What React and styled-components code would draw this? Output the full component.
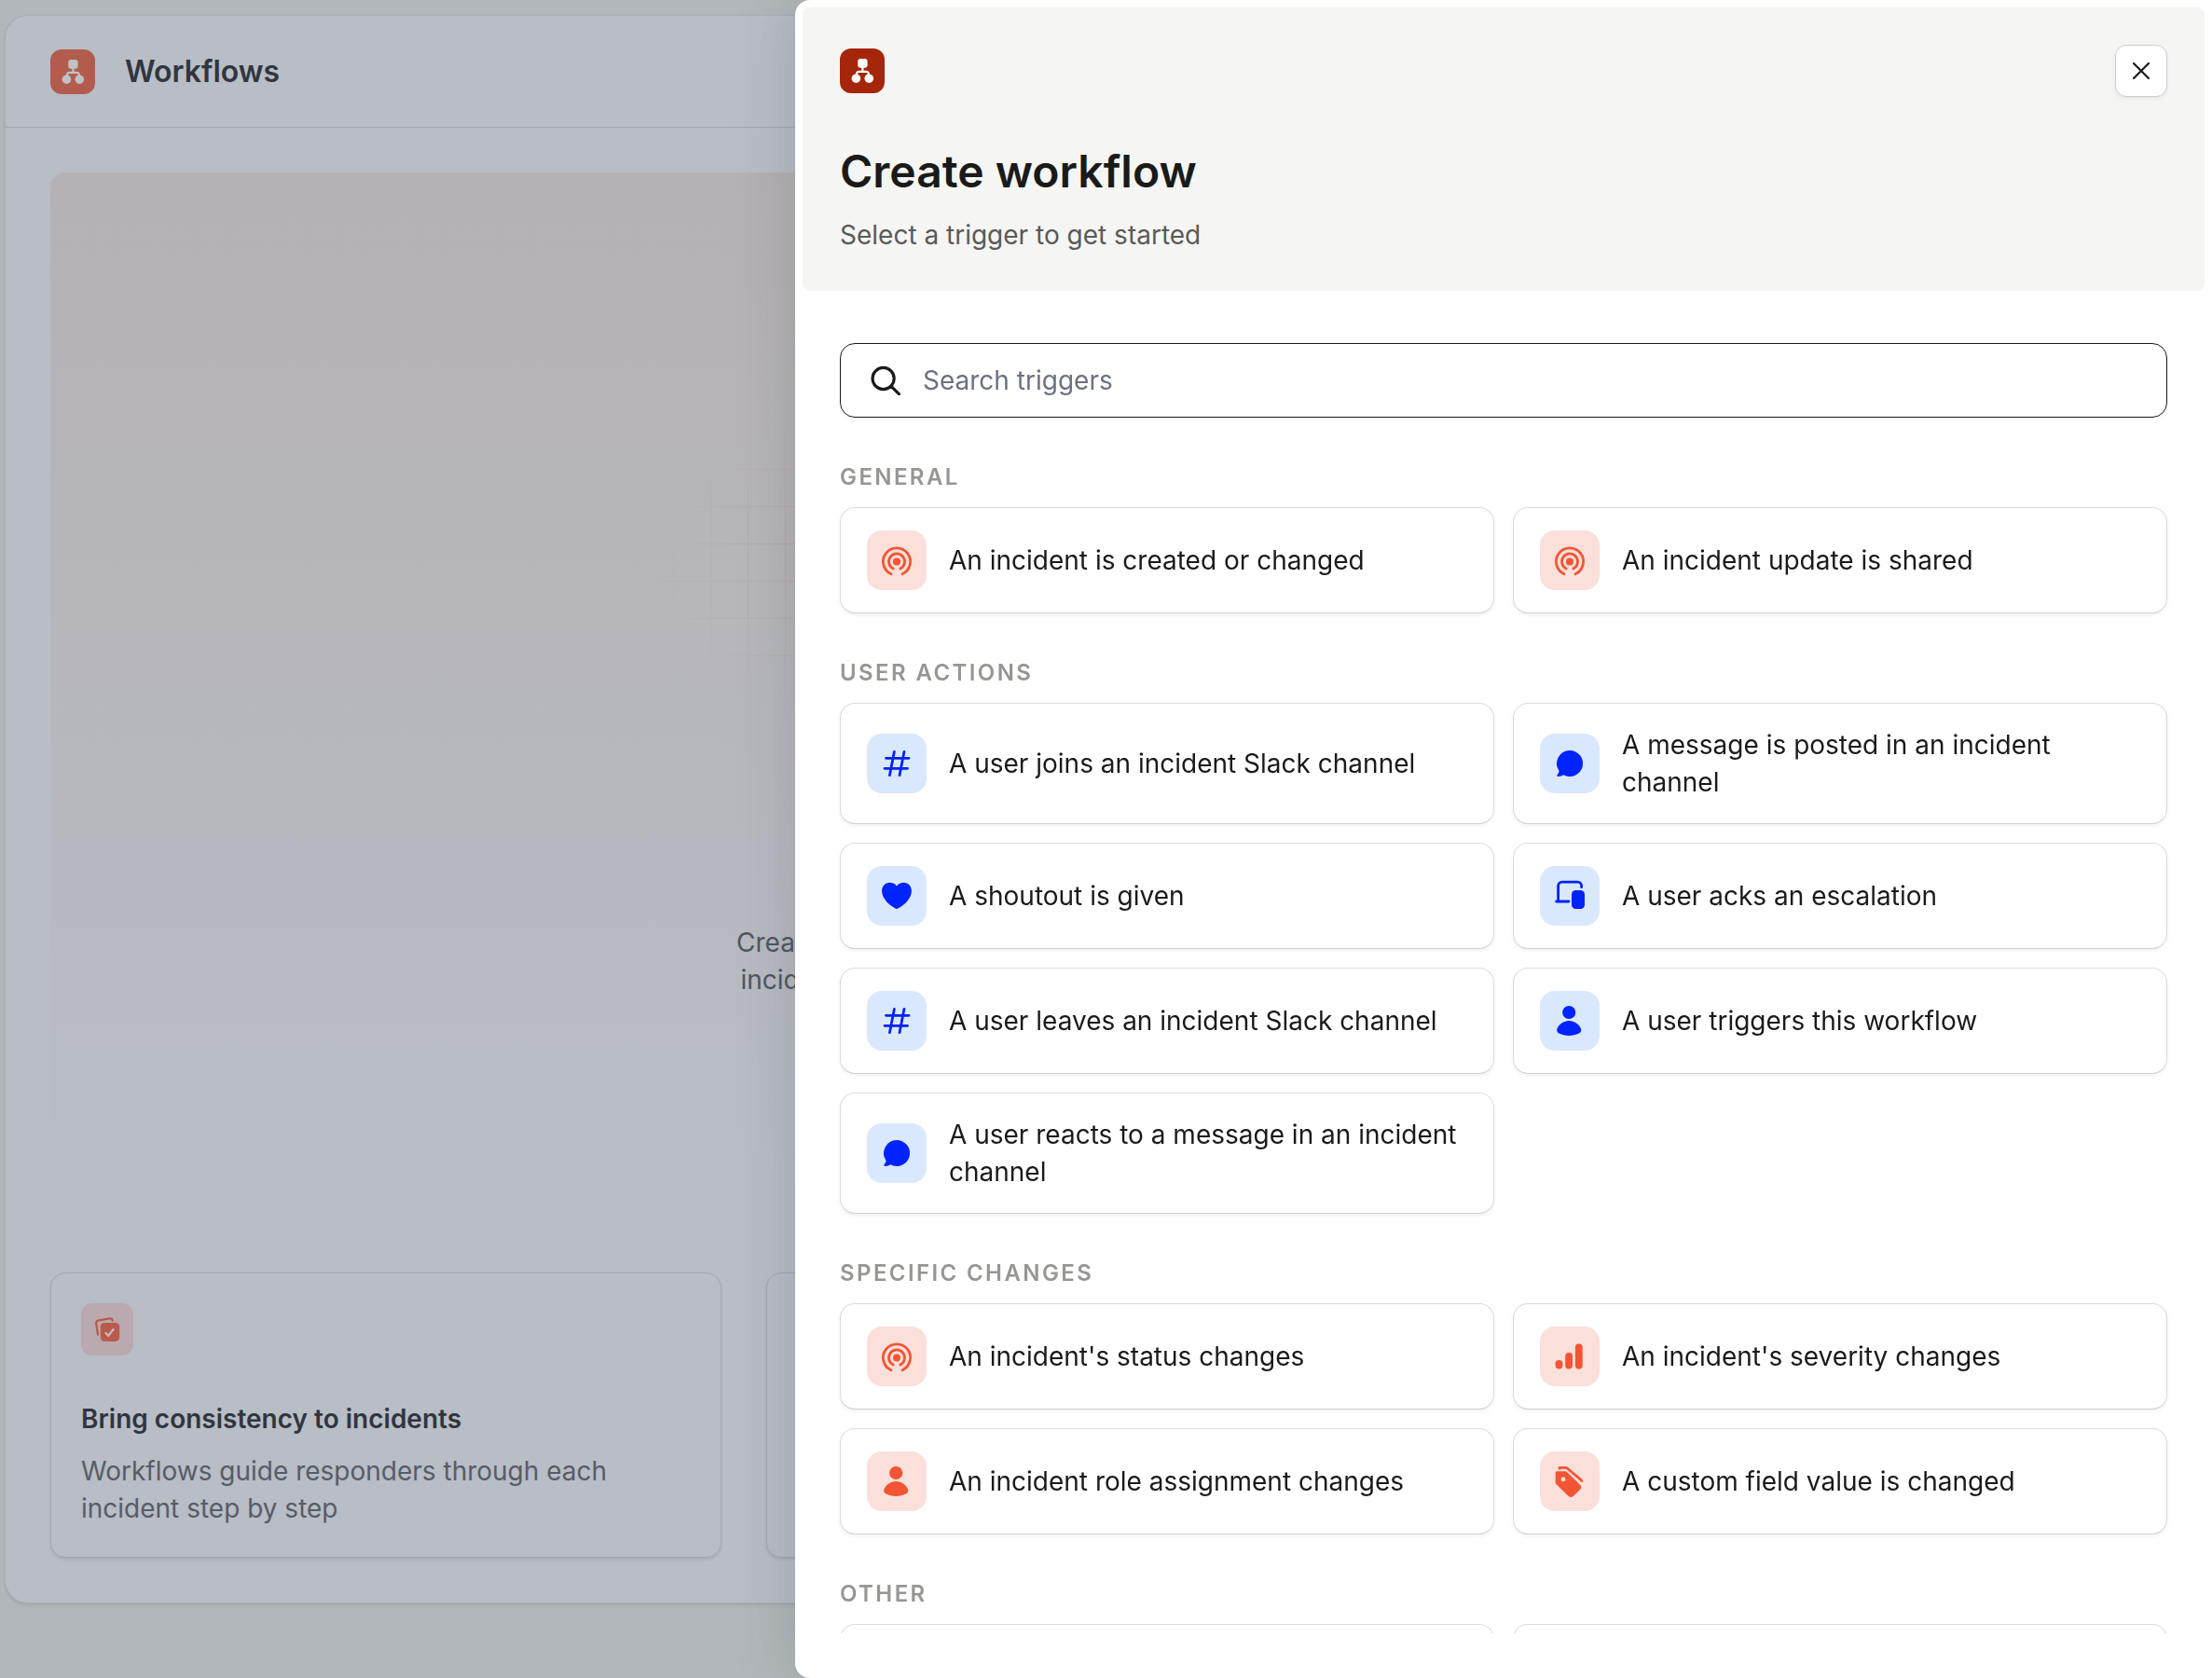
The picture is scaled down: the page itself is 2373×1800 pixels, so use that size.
import React from "react";
import styled, { createGlobalStyle } from "styled-components";

const GlobalStyle = createGlobalStyle`
  *, *::before, *::after { box-sizing: border-box; }
  body {
    margin: 0;
    background: #b1b7ba;
    color: #1a1a19;
    font-family: Inter, "Liberation Sans", sans-serif;
    font-size: 28px;
    line-height: 40px;
  }
  h1, h2, h3, p { margin: 0; }
`;

/* ---------- page behind the drawer ---------- */

const Page = styled.div`
  min-height: 100vh;
  padding: 17px 16px 80px 6px;
  overflow: hidden;
`;

const PageCard = styled.main`
  background: #b8bdc6;
  border-radius: 24px;
  box-shadow: 0 0 0 1px #a9afb6, 0 2px 4px rgba(60, 70, 80, 0.2);
`;

const PageHeader = styled.header`
  display: flex;
  align-items: center;
  gap: 32px;
  height: 120px;
  padding: 0 48px;
  border-bottom: 1px solid #a1a7b0;
`;

const PageTitle = styled.h1`
  font-size: 32px;
  line-height: 40px;
  font-weight: 600;
  color: #31353f;
`;

const PageBody = styled.div`
  display: flex;
  flex-direction: column;
  gap: 48px;
  padding: 48px;
`;

const Banner = styled.section`
  display: flex;
  flex-direction: column;
  align-items: center;
  gap: 168px;
  min-height: 1132px;
  padding-top: 198px;
  border-radius: 16px;
  background: linear-gradient(#b5b1b4, #b8bdc6 96%);
`;

const BannerGrid = styled.div`
  width: 1000px;
  max-width: 100%;
  height: 440px;
  background-image:
    linear-gradient(rgba(180, 150, 160, 0.8) 1px, transparent 1px),
    linear-gradient(90deg, rgba(180, 150, 160, 0.8) 1px, transparent 1px);
  background-size: 40px 40px;
  mask-image: radial-gradient(closest-side, #000 40%, transparent);
`;

const BannerText = styled.p`
  align-self: flex-start;
  padding-left: 736px;
  color: #50555f;
  text-align: center;
`;

const Line = styled.span`
  display: block;
`;

const Features = styled.div`
  display: grid;
  grid-template-columns: repeat(3, 1fr);
  gap: 48px;
`;

const Feature = styled.article`
  display: flex;
  flex-direction: column;
  gap: 16px;
  padding: 32px;
  border: 1px solid #a1a7b0;
  border-radius: 16px;
  box-shadow: 0 2px 3px rgba(60, 70, 80, 0.14);
`;

const FeatureTitle = styled.h2`
  margin-top: 32px;
  font-size: 28px;
  line-height: 40px;
  font-weight: 600;
  color: #31353f;
`;

const FeatureText = styled.p`
  color: #575c66;
`;

/* ---------- shared tiles ---------- */

const tones = {
  brand: ["#a5260a", "#ffffff"],
  brandDim: ["#b35c4e", "#bfc2c5"],
  red: ["#fbdfda", "#f25533"],
  blue: ["#dae8fd", "#0023ff"],
  redDim: ["#baa9af", "#b85a4c"],
};

const Tile = styled.span`
  display: block;
  flex: none;
  width: ${(p) => p.$size}px;
  height: ${(p) => p.$size}px;
  border-radius: ${(p) => (p.$size > 60 ? 16 : 12)}px;
  background: ${(p) => tones[p.$tone][0]};
  color: ${(p) => tones[p.$tone][1]};

  svg { display: block; width: 100%; height: 100%; }
`;

/* ---------- drawer ---------- */

const Drawer = styled.aside`
  position: fixed;
  inset: 0 0 0 auto;
  display: flex;
  flex-direction: column;
  width: 1520px;
  max-width: 100vw;
  padding: 8px 8px 48px;
  background: #fff;
  border-radius: 16px 0 0 16px;
  box-shadow: 0 0 64px rgba(60, 70, 70, 0.22);
`;

const DrawerHeader = styled.header`
  padding: 40px;
  border-radius: 8px;
  background: #f5f5f3;
`;

const HeaderRow = styled.div`
  display: flex;
  align-items: center;
  justify-content: space-between;
  height: 56px;
  margin-bottom: 48px;
`;

const CloseButton = styled.button`
  display: grid;
  place-items: center;
  width: 56px;
  height: 56px;
  padding: 0;
  border: 1px solid #cfcfcf;
  border-radius: 12px;
  background: #fff;
  color: #1a1a19;
  box-shadow: 0 2px 4px rgba(0, 0, 0, 0.06);
`;

const DrawerTitle = styled.h2`
  font-size: 48px;
  line-height: 64px;
  font-weight: 600;
  margin-bottom: 16px;
`;

const DrawerText = styled.p`
  color: #5a5a57;
`;

const DrawerBody = styled.div`
  display: flex;
  flex: 1;
  flex-direction: column;
  gap: 48px;
  min-height: 0;
  padding: 56px 40px 0;
  overflow-y: auto;
  scrollbar-width: none;
`;

const SearchField = styled.label`
  display: flex;
  flex: none;
  align-items: center;
  gap: 24px;
  height: 80px;
  padding: 0 32px;
  border: 1px solid #1a1a19;
  border-radius: 16px;
  box-shadow: 0 2px 4px rgba(0, 0, 0, 0.05);
`;

const SearchInput = styled.input`
  flex: 1;
  min-width: 0;
  padding: 0;
  border: 0;
  outline: 0;
  background: none;
  color: inherit;
  font: inherit;

  &::placeholder { color: #6b7280; opacity: 1; }
`;

const GroupTitle = styled.h3`
  margin-bottom: 16px;
  font-size: 24px;
  line-height: 32px;
  font-weight: 600;
  letter-spacing: 0.1em;
  text-transform: uppercase;
  color: #979693;
`;

const TriggerGrid = styled.div`
  display: grid;
  grid-template-columns: repeat(2, 1fr);
  gap: 20px;
`;

const TriggerCard = styled.button`
  display: flex;
  align-items: center;
  gap: 24px;
  min-height: 114px;
  padding: 24px 28px;
  border: 1px solid #dcdcdc;
  border-bottom-color: #d2d2d2;
  border-radius: 16px;
  background: #fff;
  color: inherit;
  font: inherit;
  text-align: left;
  box-shadow: 0 2px 4px rgba(0, 0, 0, 0.06);
`;

/* ---------- icons ---------- */

const line = { fill: "none", stroke: "currentColor", strokeLinecap: "round", strokeLinejoin: "round" };

const FlowIcon = () => (
  <svg viewBox="0 0 48 48" fill="currentColor" aria-hidden="true">
    <rect x="19.2" y="11" width="10.4" height="9.8" rx="3" />
    <circle cx="17.4" cy="32.2" r="4.8" />
    <circle cx="31.3" cy="32.2" r="4.8" />
    <path {...line} strokeWidth="2.2" d="M24.4 20v4.8M18 28.5v-1.2a2.5 2.5 0 0 1 2.5-2.5h7.8a2.5 2.5 0 0 1 2.5 2.5v1.2" />
  </svg>
);

const TasksIcon = () => (
  <svg viewBox="0 0 56 56" aria-hidden="true">
    <path {...line} strokeWidth="2.2" d="M18 33.6 16.2 22a3 3 0 0 1 2.4-3.6l11.8-2a3 3 0 0 1 3.4 2.3" />
    <rect x="20.8" y="21" width="20.4" height="20" rx="4.5" fill="currentColor" />
    <path {...line} stroke="#cbb9bd" strokeWidth="2.2" d="m26.4 31.8 2.8 3.2 5.4-7" />
  </svg>
);

const SignalIcon = () => (
  <svg viewBox="0 0 64 64" aria-hidden="true">
    <circle cx="32" cy="33.4" r="4" fill="currentColor" />
    <path {...line} strokeWidth="2.8" d="M26 46.7a14.6 14.6 0 1 1 12 0M28.2 41a8.5 8.5 0 1 1 7.6 0" />
  </svg>
);

const HashIcon = () => (
  <svg viewBox="0 0 64 64" aria-hidden="true">
    <path {...line} strokeWidth="2.8" d="M20.5 26.3H45M19 37.3h24.5M29.4 19.3l-5 25.4M40 19.3l-5 25.4" />
  </svg>
);

const ChatIcon = () => (
  <svg viewBox="0 0 64 64" fill="currentColor" aria-hidden="true">
    <path d="M32 18a14 14 0 1 1-6.6 26.3c-2 1.2-3.8 1.7-5.7 1.7-1.2 0-1.7-1.2-1-2.1 1.3-1.7 1.9-3 1.8-4A14 14 0 0 1 32 18z" />
  </svg>
);

const HeartIcon = () => (
  <svg viewBox="0 0 64 64" fill="currentColor" aria-hidden="true">
    <path d="M24.4 17.8c3.2 0 6 1.3 7.6 3.6 1.6-2.3 4.4-3.6 7.6-3.6 4.8 0 8.3 3.9 8.3 9 0 8.2-8 15.2-14.5 18.8a3 3 0 0 1-2.8 0C24 42 16.1 35 16.1 26.8c0-5.1 3.5-9 8.3-9z" />
  </svg>
);

const DevicesIcon = () => (
  <svg viewBox="0 0 64 64" aria-hidden="true">
    <path {...line} strokeWidth="2.8" d="M19.6 38V21.2a4 4 0 0 1 4-4h17a4 4 0 0 1 4 4v1.5M17.6 38H31" />
    <rect x="34" y="26" width="14" height="20" rx="4.5" fill="currentColor" />
  </svg>
);

const PersonIcon = () => (
  <svg viewBox="0 0 64 64" fill="currentColor" aria-hidden="true">
    <circle cx="31.2" cy="23" r="7.1" />
    <path d="M31.2 32c5.8 0 10.7 3.5 12.8 8.6.8 2-.2 4.2-2.2 5-3.2 1.5-6.8 2.3-10.6 2.3s-7.4-.8-10.6-2.3c-2-.8-3-3-2.2-5C20.5 35.500 25.400 32 31.200 32z" />
  </svg>
);

const BarsIcon = () => (
  <svg viewBox="0 0 64 64" fill="currentColor" aria-hidden="true">
    <rect x="16.6" y="36" width="7.8" height="9.4" rx="3.9" />
    <rect x="27.2" y="28" width="7.8" height="17.4" rx="3.6" />
    <rect x="37.9" y="18.6" width="7.8" height="26.8" rx="3.6" />
  </svg>
);

const TagsIcon = () => (
  <svg viewBox="0 0 64 64" aria-hidden="true">
    <path {...line} strokeLinecap="butt" strokeWidth="2.7" d="M21 19.500v-2.200h6a4 4 0 0 1 2.600 1L44 30.400a3 3 0 0 1 1 2.300" />
    <path
      fill="currentColor"
      fillRule="evenodd"
      d="M18 21.3h8.6a4 4 0 0 1 2.8 1.2l13.6 13a4 4 0 0 1 0 5.6l-7 6.600a4 4 0 0 1-5.600 0L17.900 35.600a4 4 0 0 1-1.200-2.800V22.600a1.300 1.300 0 0 1 1.300-1.300zM25 27.500a2.400 2.400 0 1 0 0 4.800 2.400 2.400 0 0 0 0-4.800z"
    />
  </svg>
);

const SearchIcon = () => (
  <svg width="32" height="32" viewBox="0 0 32 32" aria-hidden="true">
    <path {...line} strokeWidth="3.2" d="M25.2 14a11.6 11.6 0 1 1-23.2 0 11.6 11.6 0 0 1 23.2 0zM22 22.300l8.400 8.400" />
  </svg>
);

const CloseIcon = () => (
  <svg width="18" height="18" viewBox="0 0 18 18" aria-hidden="true">
    <path {...line} strokeWidth="2.2" d="m1 1 16 16M17 1 1 17" />
  </svg>
);

/* ---------- data ---------- */

const groups = [
  {
    title: "General",
    tone: "red",
    items: [
      ["An incident is created or changed", SignalIcon],
      ["An incident update is shared", SignalIcon],
    ],
  },
  {
    title: "User actions",
    tone: "blue",
    items: [
      ["A user joins an incident Slack channel", HashIcon],
      ["A message is posted in an incident channel", ChatIcon],
      ["A shoutout is given", HeartIcon],
      ["A user acks an escalation", DevicesIcon],
      ["A user leaves an incident Slack channel", HashIcon],
      ["A user triggers this workflow", PersonIcon],
      ["A user reacts to a message in an incident channel", ChatIcon],
    ],
  },
  {
    title: "Specific changes",
    tone: "red",
    items: [
      ["An incident's status changes", SignalIcon],
      ["An incident's severity changes", BarsIcon],
      ["An incident role assignment changes", PersonIcon],
      ["A custom field value is changed", TagsIcon],
    ],
  },
  { title: "Other", tone: "red", items: [[], []] },
];

export default function App() {
  return (
    <>
      <GlobalStyle />
      <Page>
        <PageCard>
          <PageHeader>
            <Tile $size={48} $tone="brandDim"><FlowIcon /></Tile>
            <PageTitle>Workflows</PageTitle>
          </PageHeader>
          <PageBody>
            <Banner>
              <BannerGrid />
              <BannerText>
                <Line>Creat</Line>
                <Line>incid</Line>
              </BannerText>
            </Banner>
            <Features>
              <Feature>
                <Tile $size={56} $tone="redDim"><TasksIcon /></Tile>
                <FeatureTitle>Bring consistency to incidents</FeatureTitle>
                <FeatureText>Workflows guide responders through each incident step by step</FeatureText>
              </Feature>
              <Feature />
              <Feature />
            </Features>
          </PageBody>
        </PageCard>
      </Page>

      <Drawer role="dialog" aria-labelledby="drawer-title">
        <DrawerHeader>
          <HeaderRow>
            <Tile $size={48} $tone="brand"><FlowIcon /></Tile>
            <CloseButton type="button" aria-label="Close"><CloseIcon /></CloseButton>
          </HeaderRow>
          <DrawerTitle id="drawer-title">Create workflow</DrawerTitle>
          <DrawerText>Select a trigger to get started</DrawerText>
        </DrawerHeader>
        <DrawerBody>
          <SearchField>
            <SearchIcon />
            <SearchInput type="text" placeholder="Search triggers" aria-label="Search triggers" />
          </SearchField>
          {groups.map(({ title, tone, items }) => (
            <section key={title}>
              <GroupTitle>{title}</GroupTitle>
              <TriggerGrid>
                {items.map(([label, Icon], i) => (
                  <TriggerCard type="button" key={i}>
                    {Icon && <Tile $size={64} $tone={tone}><Icon /></Tile>}
                    {label}
                  </TriggerCard>
                ))}
              </TriggerGrid>
            </section>
          ))}
        </DrawerBody>
      </Drawer>
    </>
  );
}
